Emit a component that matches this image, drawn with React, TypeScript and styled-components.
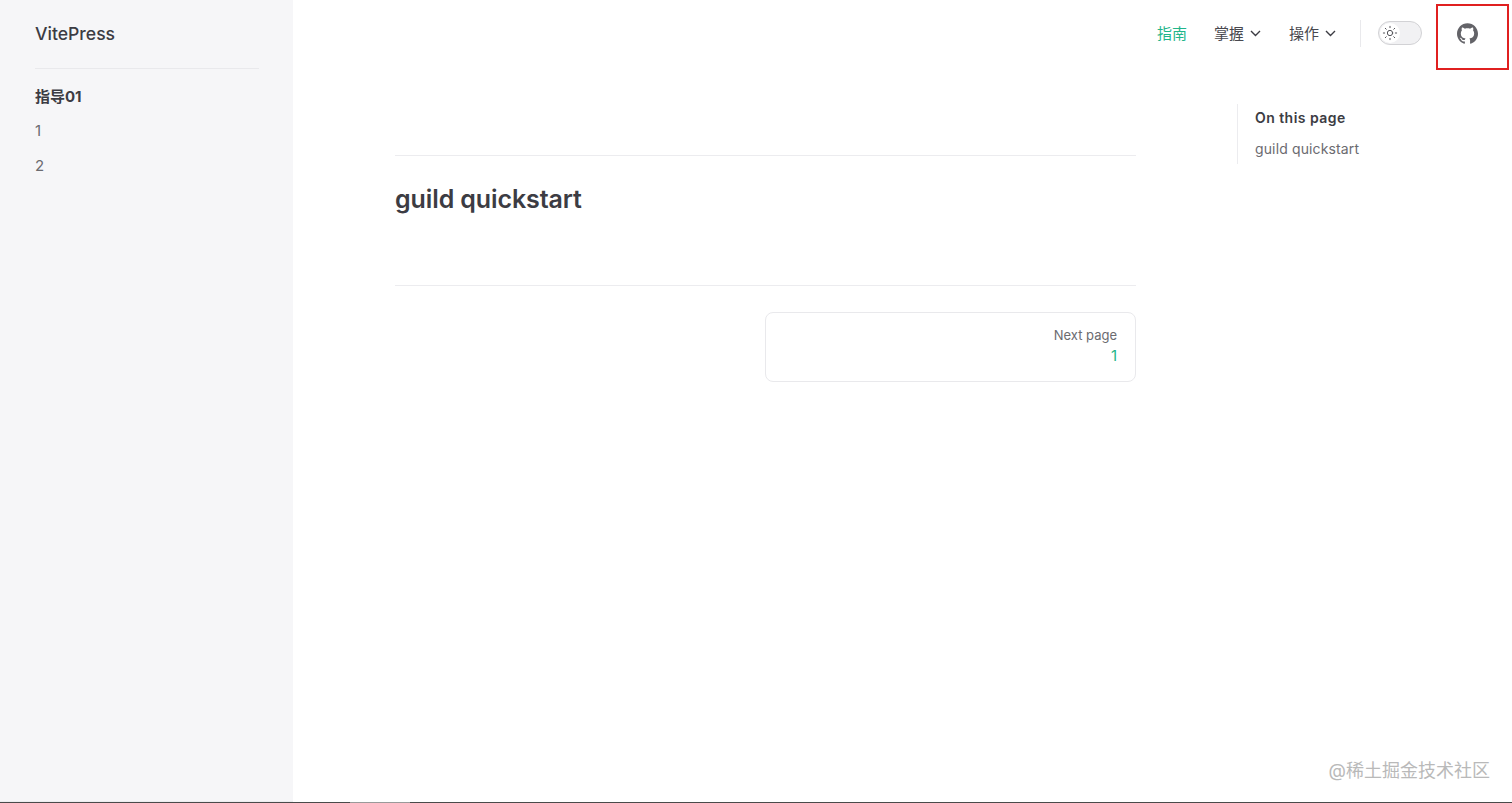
import { Sun } from "lucide-react";
import { SiGithub } from "react-icons/si";
import styled, { createGlobalStyle } from "styled-components";

const FONT = `Inter, "Noto Sans CJK SC", sans-serif`;
const BRAND_GREEN = "#1fb58a";

const GlobalStyle = createGlobalStyle`
  html,
  body {
    margin: 0;
    height: 100%;
    overflow: hidden;
    background: #fff;
  }

  #root {
    height: 100%;
  }

  body {
    font-family: ${FONT};
    color: #3c3c43;
    -webkit-font-smoothing: antialiased;
  }
`;

const Page = styled.div`
  position: relative;
  height: 803px;
  display: flex;
  flex-direction: column;
`;

const Body = styled.div`
  flex: 1;
  min-height: 0;
  display: flex;
`;

const BottomEdge = styled.div`
  height: 1px;
  background: linear-gradient(
    to right,
    #4a4a4a 0 350px,
    #9a9a9a 350px 410px,
    #4a4a4a 410px
  );
`;

const Sidebar = styled.aside`
  width: 293px;
  flex: none;
  box-sizing: border-box;
  padding: 0 34px 0 35px;
  background: #f6f6f8;
  border-bottom: 1px solid #ececef;
`;

const Brand = styled.div`
  height: 66px;
  padding-bottom: 2px;
  display: flex;
  align-items: center;
  font-size: 17.6px;
  font-weight: 500;
  border-bottom: 1px solid #e9e9ec;
`;

const SideTitle = styled.div`
  margin-top: 11px;
  height: 34px;
  line-height: 34px;
  font-size: 15px;
  font-weight: 700;
  color: #3c3c43;
`;

const SideLink = styled.div`
  height: 34.5px;
  line-height: 34.5px;
  font-size: 15px;
  color: #6b6b70;
`;

const Main = styled.main`
  flex: 1;
  min-width: 0;
  display: flex;
  flex-direction: column;
`;

const Navbar = styled.nav`
  height: 66px;
  display: flex;
  align-items: center;
  justify-content: flex-end;
  padding-right: 34px;
`;

const NavItem = styled.div<{ $active?: boolean; $after: number }>`
  display: flex;
  align-items: center;
  gap: 6px;
  margin: 0 ${({ $after }) => $after}px 2px 0;
  font-size: 15px;
  color: ${({ $active }) => ($active ? BRAND_GREEN : "#48484e")};
`;

const Chevron = styled.svg`
  width: 11px;
  height: 7px;
  margin-top: 2px;
  fill: none;
  stroke: #3c3c43;
  stroke-width: 1.4;
`;

const NavDivider = styled.div`
  width: 1px;
  height: 27px;
  background: #e9e9ec;
  margin-right: 17px;
`;

const Switch = styled.div`
  width: 44px;
  height: 24px;
  box-sizing: border-box;
  margin-right: 35px;
  padding: 1px;
  display: flex;
  background: #f1f1f3;
  border: 1px solid #d2d2d5;
  border-radius: 12px;
`;

const Knob = styled.div`
  width: 20px;
  height: 20px;
  display: flex;
  align-items: center;
  justify-content: center;
  background: #fff;
  border-radius: 50%;
  color: #54545a;
`;

const GithubLink = styled.div`
  display: flex;
  color: #636368;
`;

const Content = styled.div`
  display: flex;
  padding-left: 102px;
`;

const Doc = styled.article`
  width: 741px;
  flex: none;
  padding-top: 89px;
`;

const Title = styled.h1`
  margin: 0;
  height: 131px;
  box-sizing: border-box;
  padding-top: 26px;
  border-top: 1px solid #ececef;
  border-bottom: 1px solid #ececef;
  font-size: 25px;
  line-height: 34px;
  font-weight: 600;
  letter-spacing: -0.1px;
  color: #3c3c43;
`;

const Pager = styled.div`
  display: flex;
  justify-content: flex-end;
  padding-top: 26px;
`;

const NextCard = styled.div`
  width: 371px;
  height: 70px;
  box-sizing: border-box;
  padding: 12px 18px 0;
  text-align: right;
  border: 1px solid #e9e9ec;
  border-radius: 8px;
`;

const NextLabel = styled.div`
  font-size: 13px;
  line-height: 20px;
  color: #6b6b70;
`;

const NextTitle = styled.div`
  font-size: 15px;
  line-height: 22px;
  color: ${BRAND_GREEN};
`;

const Outline = styled.div`
  margin: 38px 0 0 101px;
  height: 60px;
  padding-left: 17px;
  border-left: 1px solid #ececef;
`;

const OutlineTitle = styled.div`
  font-size: 14px;
  line-height: 28px;
  font-weight: 600;
  letter-spacing: 0.45px;
  color: #3c3c43;
`;

const OutlineLink = styled.div`
  margin-top: 3px;
  font-size: 14px;
  line-height: 28px;
  letter-spacing: 0.13px;
  color: #6b6b70;
`;

const Highlight = styled.div`
  position: absolute;
  left: 1436px;
  top: 4px;
  width: 73px;
  height: 66px;
  box-sizing: border-box;
  border: 2px solid #e02020;
`;

const Watermark = styled.div`
  position: absolute;
  right: 22px;
  bottom: 20px;
  font-size: 18px;
  line-height: 24px;
  color: #b9b9b9;
`;

function NavChevron() {
  return (
    <Chevron viewBox="0 0 11 7">
      <path d="M1 1l4.5 4.5L10 1" />
    </Chevron>
  );
}

export default function App() {
  return (
    <>
      <GlobalStyle />
      <Page>
        <Body>
          <Sidebar>
            <Brand>VitePress</Brand>
            <SideTitle>指导01</SideTitle>
            <SideLink>1</SideLink>
            <SideLink>2</SideLink>
          </Sidebar>
          <Main>
            <Navbar>
              <NavItem $active $after={27}>
                指南
              </NavItem>
              <NavItem $after={28}>
                掌握
                <NavChevron />
              </NavItem>
              <NavItem $after={24}>
                操作
                <NavChevron />
              </NavItem>
              <NavDivider />
              <Switch>
                <Knob>
                  <Sun size={16} strokeWidth={1.5} />
                </Knob>
              </Switch>
              <GithubLink>
                <SiGithub size={21} />
              </GithubLink>
            </Navbar>
            <Content>
              <Doc>
                <Title>guild quickstart</Title>
                <Pager>
                  <NextCard>
                    <NextLabel>Next page</NextLabel>
                    <NextTitle>1</NextTitle>
                  </NextCard>
                </Pager>
              </Doc>
              <Outline>
                <OutlineTitle>On this page</OutlineTitle>
                <OutlineLink>guild quickstart</OutlineLink>
              </Outline>
            </Content>
          </Main>
        </Body>
        <BottomEdge />
        <Highlight />
        <Watermark>@稀土掘金技术社区</Watermark>
      </Page>
    </>
  );
}
